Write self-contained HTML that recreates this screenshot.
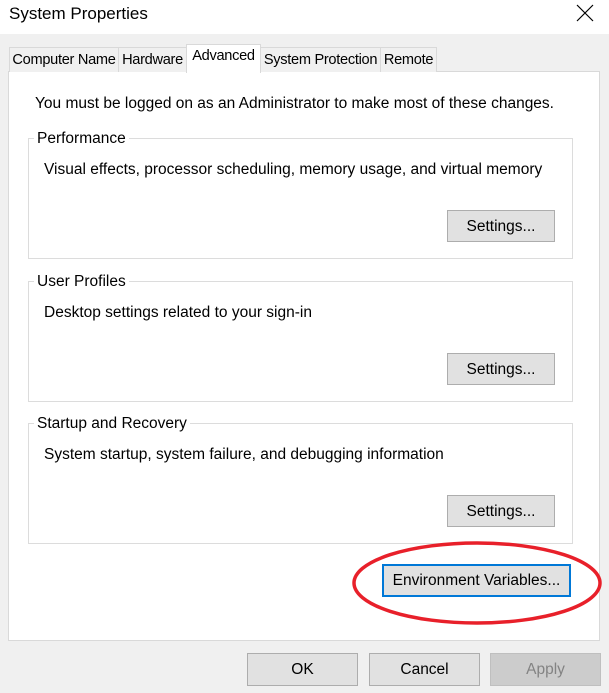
<!DOCTYPE html>
<html><head><style>
*{box-sizing:border-box;margin:0;padding:0}
body{width:609px;height:693px;background:#f0f0f0;font-family:"Liberation Sans",sans-serif;font-size:15.5px;color:#000;position:relative;overflow:hidden}
.a{position:absolute;white-space:nowrap}
.title{left:0;top:0;width:609px;height:34px;background:#fff}
.tab{position:absolute;top:47px;height:25px;border:1px solid #d9d9d9;border-bottom:none;background:#f0f0f0;padding:4px 0 0 0;text-align:center;white-space:nowrap;overflow:visible;font-size:14.6px;letter-spacing:-0.3px}
.panel{left:8px;top:71px;width:592px;height:570px;background:#fff;border:1px solid #d9d9d9}
.grp{position:absolute;left:28px;width:545px;height:121px;border:1px solid #dcdcdc}
.lbl{position:absolute;left:6px;top:-10px;background:#fff;padding:0 3px}
.btn{position:absolute;background:#e1e1e1;border:1px solid #adadad;text-align:center;line-height:29px;white-space:nowrap}
</style></head><body>
<div class="a title"></div>
<div class="a" style="left:9px;top:4px;font-size:17px">System Properties</div>
<svg class="a" style="left:576px;top:4px" width="18" height="18"><path d="M1 1L17 17M17 1L1 17" stroke="#000" stroke-width="1.2"/></svg>
<div class="a panel"></div>
<div class="tab" style="left:9px;width:110px">Computer Name</div>
<div class="tab" style="left:118px;width:69px">Hardware</div>
<div class="tab" style="left:260px;width:121px">System Protection</div>
<div class="tab" style="left:380px;width:57px">Remote</div>
<div class="tab" style="left:186px;width:75px;top:44px;height:29px;background:#fff;padding-top:3px">Advanced</div>
<div class="a" style="left:35px;top:95px">You must be logged on as an Administrator to make most of these changes.</div>
<div class="grp" style="top:138px"><span class="lbl" style="left:5px;top:-9px">Performance</span><div class="a" style="left:15px;top:22px">Visual effects, processor scheduling, memory usage, and virtual memory</div></div>
<div class="grp" style="top:281px"><span class="lbl" style="left:5px;top:-9px">User Profiles</span><div class="a" style="left:15px;top:22px">Desktop settings related to your sign-in</div></div>
<div class="grp" style="top:423px"><span class="lbl" style="left:5px;top:-9px">Startup and Recovery</span><div class="a" style="left:15px;top:22px">System startup, system failure, and debugging information</div></div>
<div class="btn" style="left:447px;top:210px;width:108px;height:32px;line-height:31px">Settings...</div>
<div class="btn" style="left:447px;top:353px;width:108px;height:32px;line-height:31px">Settings...</div>
<div class="btn" style="left:447px;top:495px;width:108px;height:32px;line-height:31px">Settings...</div>
<div class="btn" style="left:382px;top:564px;width:189px;height:33px;border:2px solid #0078d7;line-height:30px">Environment Variables...</div>
<svg class="a" style="left:350px;top:538px" width="256" height="90"><ellipse cx="127" cy="45" rx="123" ry="40" fill="none" stroke="#e8202a" stroke-width="3.5"/></svg>
<div class="btn" style="left:247px;top:653px;width:111px;height:33px;line-height:31px">OK</div>
<div class="btn" style="left:369px;top:653px;width:111px;height:33px;line-height:31px">Cancel</div>
<div class="btn" style="left:490px;top:653px;width:111px;height:33px;line-height:31px;background:#cccccc;border-color:#bfbfbf;color:#838383">Apply</div>
</body></html>
